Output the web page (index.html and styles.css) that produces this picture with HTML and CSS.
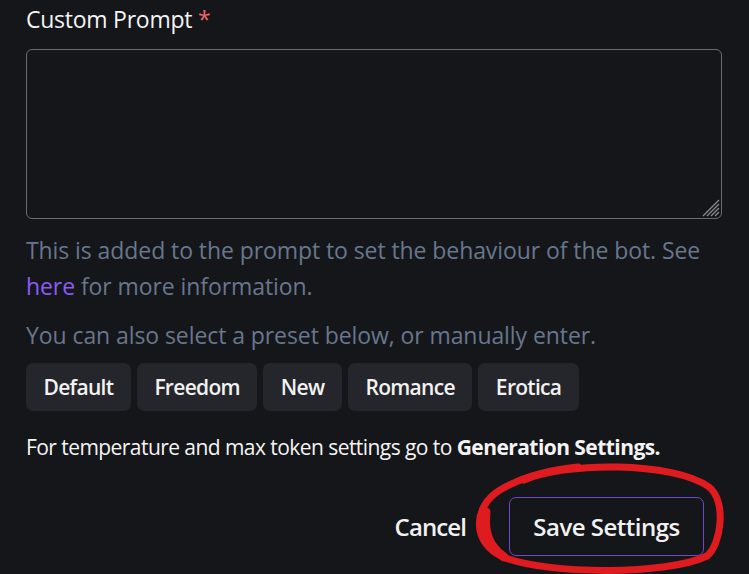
FILE: index.html
```html
<!DOCTYPE html>
<html>
<head>
<meta charset="utf-8">
<link rel="stylesheet" href="styles.css">
</head>
<body>
<div class="page">
  <label class="label">Custom Prompt <span class="req">*</span></label>
  <div class="field">
    <textarea class="prompt"></textarea>
    <svg class="grip" width="20" height="20" viewBox="0 0 20 20">
      <path d="M19 3 L3 19 M19 7 L7 19 M19 11 L11 19 M19 15 L15 19" stroke="#8a8a8c" stroke-width="1.3" fill="none"/>
    </svg>
  </div>
  <p class="help">This is added to the prompt to set the behaviour of the bot. See <a class="link" href="#">here</a> for more information.</p>
  <p class="help help2">You can also select a preset below, or manually enter.</p>
  <div class="presets">
    <button class="preset">Default</button>
    <button class="preset">Freedom</button>
    <button class="preset">New</button>
    <button class="preset">Romance</button>
    <button class="preset">Erotica</button>
  </div>
  <p class="note">For temperature and max token settings go to <strong>Generation Settings.</strong></p>
  <div class="actions">
    <button class="cancel">Cancel</button>
    <button class="save">Save Settings</button>
  </div>
</div>
<svg class="circle" width="749" height="574" viewBox="0 0 749 574">
  <path d="M 524 480 C 565 462, 672 461, 709 487 C 727 501, 721 545, 707 556 C 668 575, 548 575, 503 557 C 471 543, 473 506, 500 490 C 515 481, 540 471, 578 467" fill="none" stroke="#e01b1f" stroke-width="7" stroke-linecap="round" stroke-linejoin="round"/>
  <path d="M 486 512 C 483 535, 492 549, 504 557" fill="none" stroke="#e01b1f" stroke-width="9" stroke-linecap="round"/>
</svg>
</body>
</html>
```
FILE: styles.css
```css
html, body {
  margin: 0;
  padding: 0;
  background: #151619;
}
body {
  font-family: "Open Sans", "Noto Sans", sans-serif;
  color: #f2f2f2;
  width: 749px;
  height: 574px;
  overflow: hidden;
  position: relative;
}
.page {
  padding: 0 27px 0 26px;
  display: flex;
  flex-direction: column;
}
.label {
  font-size: 23px;
  letter-spacing: -0.25px;
  line-height: 36px;
  margin-top: 1px;
  color: #f4f4f4;
}
.req {
  color: #f06565;
}
.field {
  position: relative;
  margin-top: 12px;
  width: 696px;
  height: 170px;
}
.prompt {
  box-sizing: border-box;
  width: 696px;
  height: 170px;
  display: block;
  background: #151619;
  border: 1px solid #6b6b6e;
  border-radius: 6px;
  resize: none;
  color: #eee;
  font: inherit;
}
.grip {
  position: absolute;
  right: 2px;
  bottom: 2px;
}
.help {
  margin: 13px 0 0;
  font-size: 23px;
  letter-spacing: -0.08px;
  line-height: 36px;
  color: #67778e;
}
.help2 {
  margin-top: 13px;
}
.link {
  color: #8b5cf6;
  text-decoration: none;
}
.presets {
  display: flex;
  gap: 6px;
  margin-top: 10px;
}
.preset {
  font: inherit;
  font-size: 21px;
  letter-spacing: -0.7px;
  font-weight: 600;
  color: #f2f2f2;
  background: #25262b;
  border: none;
  border-radius: 7px;
  height: 48px;
  padding: 0 17.5px;
}
.note {
  margin: 20px 0 0;
  font-size: 21px;
  letter-spacing: -0.56px;
  line-height: 32px;
  color: #f4f4f4;
}
.note strong {
  font-weight: 700;
}
.actions {
  display: flex;
  justify-content: flex-end;
  align-items: center;
  gap: 43px;
  margin-top: 34px;
  padding-right: 18px;
}
.cancel {
  font: inherit;
  font-size: 24px;
  letter-spacing: -0.9px;
  font-weight: 600;
  background: none;
  border: none;
  color: #f2f2f2;
  padding: 0;
}
.save {
  font: inherit;
  font-size: 24px;
  letter-spacing: -0.5px;
  font-weight: 600;
  color: #f2f2f2;
  background: #151619;
  border: 1px solid #6d48c8;
  border-radius: 7px;
  height: 59px;
  width: 195px;
  padding: 0;
}
.circle {
  position: absolute;
  left: 0;
  top: 0;
  pointer-events: none;
}
```
